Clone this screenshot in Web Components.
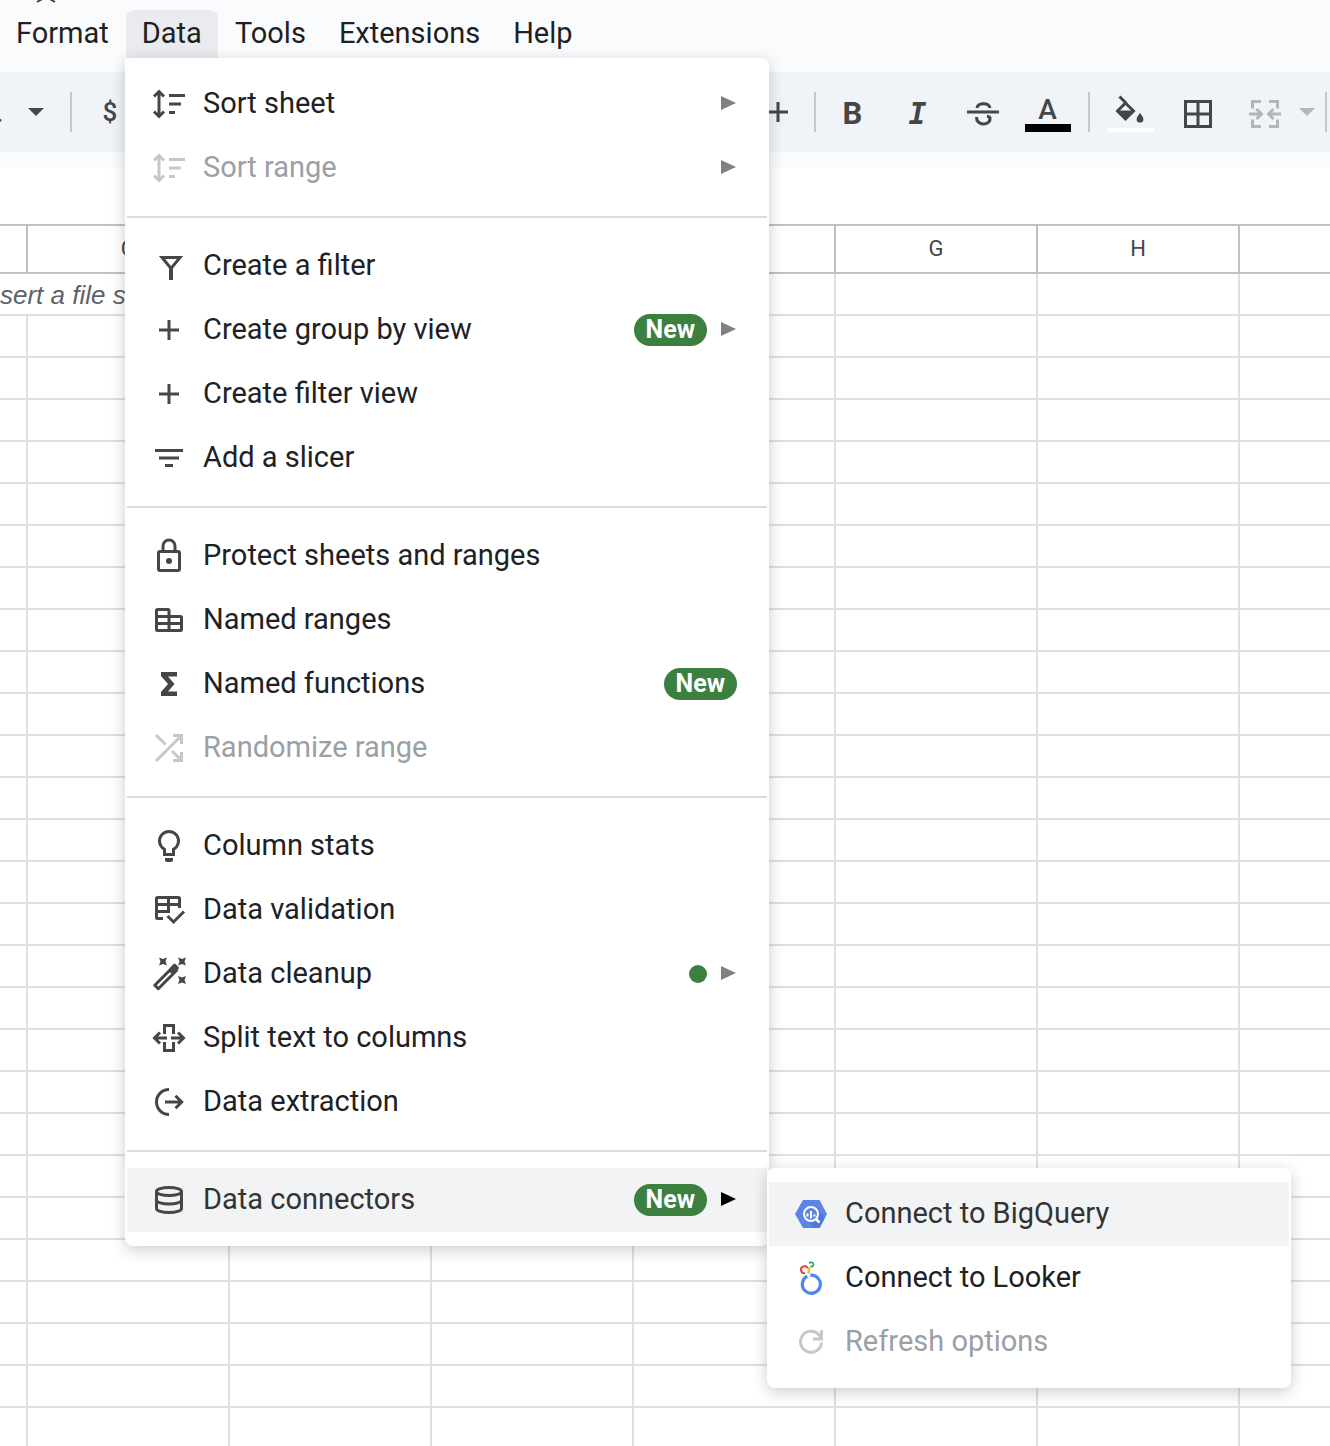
<!DOCTYPE html>
<html lang="en">
<head>
<meta charset="utf-8">
<title>Sheet</title>
<style>
  body {
    margin: 0;
    background: #fff;
    font-family: Roboto, "Liberation Sans", sans-serif;
    font-size: 29px;
    color: #1f1f1f;
  }
</style>
</head>
<body>
<sheet-app>
  <menu-bar slot="menubar">
    <menu-tab>Format</menu-tab>
    <menu-tab active>Data</menu-tab>
    <menu-tab>Tools</menu-tab>
    <menu-tab>Extensions</menu-tab>
    <menu-tab>Help</menu-tab>
  </menu-bar>

  <tool-bar slot="toolbar"></tool-bar>

  <sheet-grid slot="grid" columns=",C,,,,G,H," rows="28" note="sert a file s"></sheet-grid>

  <drop-menu slot="menu">
    <menu-item icon="sort" arrow>Sort sheet</menu-item>
    <menu-item icon="sort" arrow disabled>Sort range</menu-item>
    <menu-divider></menu-divider>
    <menu-item icon="filter">Create a filter</menu-item>
    <menu-item icon="plus" badge="New" arrow>Create group by view</menu-item>
    <menu-item icon="plus">Create filter view</menu-item>
    <menu-item icon="slicer">Add a slicer</menu-item>
    <menu-divider></menu-divider>
    <menu-item icon="lock">Protect sheets and ranges</menu-item>
    <menu-item icon="ranges">Named ranges</menu-item>
    <menu-item icon="sigma" badge="New">Named functions</menu-item>
    <menu-item icon="shuffle" disabled>Randomize range</menu-item>
    <menu-divider></menu-divider>
    <menu-item icon="bulb">Column stats</menu-item>
    <menu-item icon="validation">Data validation</menu-item>
    <menu-item icon="wand" dot arrow>Data cleanup</menu-item>
    <menu-item icon="split">Split text to columns</menu-item>
    <menu-item icon="extract">Data extraction</menu-item>
    <menu-divider></menu-divider>
    <menu-item icon="database" badge="New" arrow active>
      Data connectors
      <drop-menu slot="submenu" sub>
        <menu-item icon="bigquery" active>Connect to BigQuery</menu-item>
        <menu-item icon="looker">Connect to Looker</menu-item>
        <menu-item icon="refresh" disabled>Refresh options</menu-item>
      </drop-menu>
    </menu-item>
  </drop-menu>
</sheet-app>

<script>
// all icons share a 36px box and take the text colour
const icons = {
  sort: '<path d="M8 6v24M3 10.500l5-5 5 5M3 25.500l5 5 5-5M18 9.500h16M18 18h12M18 26.500h6"/>',
  filter: '<path d="M11 9.500h18L20 20.500z"/><path d="M20 19v13" stroke-width="4"/>',
  plus: '<path d="M18 8v20M8 18h20"/>',
  slicer: '<path d="M4 10.500h28M8 18h20M14 25.500h8"/>',
  lock: '<rect x="7.500" y="13.500" width="21" height="19" rx="1.500"/><path d="M12 13V8a6 6 0 0 1 12 0v5"/><circle cx="18" cy="23" r="3" fill="currentColor" stroke="none"/>',
  ranges: '<path d="M18 14.500V8.500a1 1 0 0 0-1-1H6.500a1 1 0 0 0-1 1v19a1 1 0 0 0 1 1h23a1 1 0 0 0 1-1v-12a1 1 0 0 0-1-1H5.500M5.500 21.500h25M18 14v14"/>',
  sigma: '<path d="M10 6h16v4.500h-9l6.500 7.500-6.500 7.500h9V30H10v-4l7-8-7-8z" fill="currentColor" stroke="none"/>',
  shuffle: '<path d="M5 5l9.500 9.500M5 31L30 6M22 5.500h8.500V14M21 21l9 9M22 30.500h8.500V22"/>',
  bulb: '<path d="M13.500 26.500v-5.200a9.500 9.500 0 1 1 9 0v5.200z"/><path d="M14 30h8v2a2 2 0 0 1-2 2h-4a2 2 0 0 1-2-2z" fill="currentColor" stroke="none"/>',
  validation: '<path d="M28.500 16V6.500a1 1 0 0 0-1-1h-21a1 1 0 0 0-1 1v19a1 1 0 0 0 1 1H12M5.500 12.500h23M5.500 19.500h12V5.500M16.500 24l6 6L33 19.500"/>',
  wand: '<path d="M3.800 29.200L22 11l3.500 3.500L7.300 32.700z" stroke-linejoin="round"/><path d="M17 14.500L22.500 8q1-.8 2 0l3 3q.8 1 0 2L22 19z" fill="currentColor" stroke="none"/><path d="M8 1.500l4 1.500 4-1.500-1.500 4 1.500 4L12 8 8 9.500l1.500-4zM27 1.500l4 1.500 4-1.500-1.500 4 1.500 4L31 8l-4 1.500 1.500-4zM27 20l4 1.500 4-1.500-1.500 4 1.500 4-4-1.500-4 1.500 1.500-4z" fill="currentColor" stroke="none"/>',
  split: '<path d="M13.500 14V5.500h9V14M13.500 22v8.500h9V22M16 18H4M9 12.500L3.500 18 9 23.500M20 18h12M27 12.500l5.500 5.500-5.500 5.500"/>',
  extract: '<path d="M18 5.500a12.500 12.500 0 0 0 0 25M14 18h16M24.500 11.800l6.200 6.200-6.200 6.200"/>',
  database: '<ellipse cx="18" cy="9.500" rx="12.500" ry="4"/><path d="M5.500 9.500v17c0 2.200 5.600 4 12.500 4s12.500-1.800 12.500-4v-17M5.500 18c0 2.200 5.600 4 12.500 4s12.500-1.800 12.500-4"/>',
  bigquery: '<path d="M10 4h16.500L34 18l-7.500 14H10L2 18z" fill="#5c85e5" stroke="none"/><path d="M23 12.500l9 9.200L26.500 32H22l-9-9z" fill="#4f77d6" stroke="none"/><circle cx="18" cy="18" r="7" fill="#5c85e5" stroke="#fff" stroke-width="2"/><path d="M14.500 17.500v3M18 15v7.500M21.500 18.500v2" stroke="#fff" stroke-width="2"/><path d="M23 23l3.500 3.500" stroke="#fff" stroke-width="2.500"/>',
  looker: '<path d="M14.300 16.200a9 9 0 1 0 3-.9" stroke="#4f86ee" stroke-width="3.200"/><path d="M12 13.200a3.500 3.500 0 1 1 2.700-5" stroke="#e04a3f" stroke-width="2.200"/><path d="M15.600 7.500q.9 3-.3 6" stroke="#f6bf26" stroke-width="2.600"/><path d="M16.300 3.500a2.200 2.200 0 1 1 1 2.900" stroke="#43a558" stroke-width="1.800"/>',
  refresh: '<path d="M28.500 18.500A10.500 10.500 0 1 1 26 11l3 3M28.500 6v9H20"/>',
  strike: '<path d="M2 18h32M12 14c.5-5.500 12-6 13 0M11.500 23c-.5 9 14 9.500 13.500 1 0-1-1-1.500-3-1.500"/>',
  borders: '<path d="M5.500 5.500h25v25h-25zM18 5.500v25M5.500 18h25"/>',
  merge: '<path d="M5.500 12.500v-7H14M5.500 23.500v7H14M22 5.500h8.500v7M22 30.500h8.500v-7M2 18h12M9.500 13l5 5-5 5M34 18H22M26.500 13l-5 5 5 5"/>',
  bucket: '<path d="M6.500 4.500l7 7M12.500 11L4.500 19l8 8 8-8z"/><path d="M4 18.500h17l-8.500 9z" fill="currentColor" stroke="none"/><path d="M27 21c-2 2.600-3.400 4.400-3.400 6.200a3.400 3.400 0 0 0 6.800 0c0-1.800-1.400-3.600-3.400-6.200z" fill="currentColor" stroke="none"/>'
}

const svgIcon = (name) => `
  <svg class="icon" width="36" height="36" viewBox="0 0 36 36" fill="none"
    stroke="currentColor" stroke-width="3" aria-hidden="true">${icons[name] ?? ''}</svg>`

class BaseElement extends HTMLElement {
  connectedCallback() {
    if (this.shadowRoot) return
    const template = document.createElement('template')
    template.innerHTML = this.render()
    const shadow = this.attachShadow({mode: "open"})
    shadow.append(template.content.cloneNode(true))
  }
}

class SheetApp extends BaseElement {
  render() {
    return `
      <style>
        :host {
          display: block;
          position: relative;
          height: 100vh;
          overflow: hidden;
        }

        header {
          background: #f9fbfd;
          padding-bottom: 16px;
        }

        .title_strip {
          height: 10px;
          padding-left: 36px;
          color: #444746;
        }

        .title_strip svg {
          display: block;
        }

        .formula_bar {
          height: 56px;
        }

        ::slotted(drop-menu) {
          position: absolute;
          left: 125px;
          top: 58px;
        }
      </style>

      <header>
        <div class="title_strip">
          <svg width="20" height="4" viewBox="0 0 20 4" fill="none" stroke="currentColor" stroke-width="2" aria-hidden="true">
            <path d="M1 2l7-4M19 2l-7-4" />
          </svg>
        </div>
        <slot name="menubar"></slot>
        <slot name="toolbar"></slot>
      </header>
      <div class="formula_bar"></div>
      <slot name="grid"></slot>
      <slot name="menu"></slot>
    `
  }
}

customElements.define('sheet-app', SheetApp)

class MenuBar extends BaseElement {
  render() {
    return `
      <style>
        :host {
          display: block;
          height: 62px;
        }

        nav {
          display: flex;
          gap: 1px;
        }
      </style>

      <nav><slot></slot></nav>
    `
  }
}

customElements.define('menu-bar', MenuBar)

class MenuTab extends BaseElement {
  render() {
    return `
      <style>
        :host {
          display: block;
        }

        button {
          height: 48px;
          padding: 0 16px 2px;
          border: none;
          border-radius: 8px 8px 0 0;
          background: none;
          font: inherit;
          color: inherit;
          cursor: pointer;
        }

        :host([active]) button {
          background: #e9ebee;
        }
      </style>

      <button type="button"><slot></slot></button>
    `
  }
}

customElements.define('menu-tab', MenuTab)

class ToolBar extends BaseElement {
  render() {
    return `
      <style>
        :host {
          display: flex;
          align-items: center;
          height: 80px;
          padding-right: 3px;
          background: #f0f4f9;
          color: #444746;
        }

        button {
          display: flex;
          flex: none;
          align-items: center;
          justify-content: center;
          width: 65px;
          height: 60px;
          padding: 0;
          border: none;
          background: none;
          font: 500 28px Roboto, sans-serif;
          color: inherit;
        }

        .caret {
          width: 20px;
        }

        .caret::before {
          content: "";
          border: 8px solid transparent;
          border-top-color: currentColor;
          border-bottom: none;
        }

        .divider {
          flex: none;
          width: 2px;
          height: 40px;
          margin: 0 8px;
          background: #c7c7c7;
        }

        .tight {
          margin: 0 4px;
        }

        .last {
          margin-right: 0;
        }

        .start, .end, .cells {
          display: flex;
          align-items: center;
        }

        .start {
          flex: 1;
          gap: 20px;
        }

        .cut {
          width: 10px;
          margin-left: -4px;
        }

        .start .currency {
          width: 28px;
          font-size: 26px;
        }

        .cells {
          gap: 2px;
        }

        .cells button:not(.swatch) {
          padding-top: 4px;
        }

        .bold {
          padding-top: 2px;
          font-size: 31px;
          font-weight: 700;
        }

        .italic {
          padding-top: 2px;
          font: italic 700 30px "DejaVu Sans Mono", monospace;
        }

        .swatch {
          flex-direction: column;
          justify-content: flex-end;
          height: 40px;
          line-height: 28px;
        }

        .swatch::after {
          content: "";
          width: 46px;
          height: 8px;
          background: var(--swatch);
        }

        .swatch .icon {
          flex: none;
        }

        .off {
          color: #b4b5b8;
        }
      </style>

      <div class="start">
        <span class="cut">.</span>
        <button class="caret" type="button" aria-label="Zoom options"></button>
        <span class="divider tight"></span>
        <button class="currency" type="button">$</button>
      </div>
      <div class="end">
        <button type="button" aria-label="Increase font size">${svgIcon('plus')}</button>
        <span class="divider tight"></span>
        <button class="bold" type="button">B</button>
        <button class="italic" type="button">I</button>
        <button type="button" aria-label="Strikethrough">${svgIcon('strike')}</button>
        <button class="swatch" type="button" style="--swatch: #000">A</button>
        <span class="divider"></span>
        <div class="cells">
          <button class="swatch" type="button" aria-label="Fill color" style="--swatch: #fff">${svgIcon('bucket')}</button>
          <button type="button" aria-label="Borders">${svgIcon('borders')}</button>
          <button class="off" type="button" aria-label="Merge cells" disabled>${svgIcon('merge')}</button>
        </div>
        <button class="caret off" type="button" aria-label="Merge options" disabled></button>
        <span class="divider last"></span>
      </div>
    `
  }
}

customElements.define('tool-bar', ToolBar)

class SheetGrid extends BaseElement {
  render() {
    const columns = this.getAttribute('columns').split(',')
    const rows = Number(this.getAttribute('rows'))
    const note = this.getAttribute('note')
    const head = columns.map((name) => `<th scope="col">${name}</th>`).join('')
    const cells = '<td></td>'.repeat(columns.length)
    const noteRow = `<tr><td class="note" colspan="2">${note}</td>${'<td></td>'.repeat(columns.length - 2)}</tr>`

    return `
      <style>
        :host {
          display: block;
          overflow: hidden;
        }

        table {
          width: 1442px;
          border-spacing: 0;
          table-layout: fixed;
        }

        th, td {
          box-sizing: border-box;
          width: 202px;
          height: 42px;
          padding: 0;
          border-right: 2px solid #e0e0e0;
          border-bottom: 2px solid #e0e0e0;
        }

        th {
          height: 50px;
          padding-bottom: 2px;
          border-top: 2px solid #c0c0c0;
          border-color: #c0c0c0;
          font-size: 22px;
          font-weight: 400;
          color: #444746;
        }

        th:first-child {
          width: 28px;
        }

        .note {
          overflow: hidden;
          padding-top: 2px;
          font: italic 26px/36px "Liberation Sans", sans-serif;
          white-space: nowrap;
          color: #5f6368;
        }
      </style>

      <table>
        <thead><tr>${head}</tr></thead>
        <tbody>${noteRow}${`<tr>${cells}</tr>`.repeat(rows - 1)}</tbody>
      </table>
    `
  }
}

customElements.define('sheet-grid', SheetGrid)

class DropMenu extends BaseElement {
  render() {
    return `
      <style>
        :host {
          display: block;
          box-sizing: border-box;
          width: 644px;
          padding: 14px 2px;
          border-radius: 0 8px 8px 8px;
          background: #fff;
          box-shadow: 0 4px 16px rgba(0, 0, 0, 0.2);
        }

        :host([sub]) {
          width: 524px;
          border-radius: 8px;
        }
      </style>

      <slot></slot>
    `
  }
}

customElements.define('drop-menu', DropMenu)

class MenuItem extends BaseElement {
  render() {
    const badge = this.getAttribute('badge')
    return `
      <style>
        :host {
          display: block;
          position: relative;
        }

        button {
          display: flex;
          align-items: center;
          width: 100%;
          height: 64px;
          padding: 0 30px 0 24px;
          border: none;
          background: none;
          font: inherit;
          color: #202124;
          text-align: left;
          cursor: pointer;
        }

        :host([active]) button {
          background: #f1f3f4;
          color: #333;
        }

        .icon {
          flex: none;
          margin-right: 16px;
          color: #444746;
        }

        .label {
          flex: 1;
          padding-bottom: 2px;
        }

        .badge {
          padding: 0 12px;
          border-radius: 16px;
          background: #3c8040;
          font-size: 25px;
          font-weight: 700;
          line-height: 32px;
          color: #fff;
        }

        .dot {
          width: 18px;
          height: 18px;
          border-radius: 50%;
          background: #3c8040;
        }

        .arrow {
          margin-left: 14px;
          color: #808080;
        }

        :host([active]) .arrow {
          color: #000;
        }

        :host([disabled]) button {
          color: #9aa0a6;
        }

        :host([disabled]) .icon {
          color: #c7c7c7;
        }

        ::slotted(drop-menu) {
          position: absolute;
          left: 100%;
          top: 0;
          z-index: 1;
        }
      </style>

      <button type="button" ${this.hasAttribute('disabled') ? 'disabled' : ''}>
        ${svgIcon(this.getAttribute('icon'))}
        <span class="label"><slot></slot></span>
        ${badge ? `<span class="badge">${badge}</span>` : ''}
        ${this.hasAttribute('dot') ? '<span class="dot"></span>' : ''}
        ${this.hasAttribute('arrow') ? `
          <svg class="arrow" width="16" height="16" viewBox="0 0 16 16" aria-hidden="true">
            <path d="M0 0l15 7-15 7z" fill="currentColor" />
          </svg>` : ''}
      </button>
      <slot name="submenu"></slot>
    `
  }
}

customElements.define('menu-item', MenuItem)

class MenuDivider extends BaseElement {
  render() {
    return `
      <style>
        :host {
          display: block;
          height: 2px;
          margin: 16px 0;
          background: #dadce0;
        }
      </style>
    `
  }
}

customElements.define('menu-divider', MenuDivider)
</script>
</body>
</html>
